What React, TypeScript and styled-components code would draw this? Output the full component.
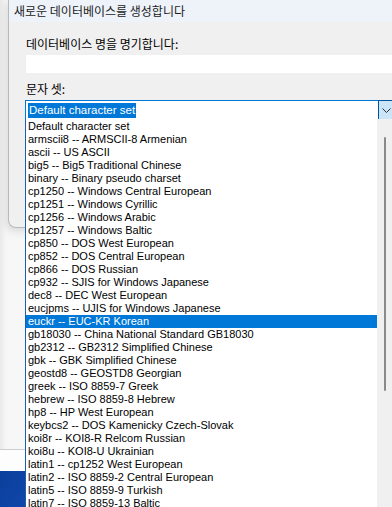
import React from 'react';
import styled, { createGlobalStyle } from 'styled-components';

const charsets = [
  'Default character set',
  'armscii8 -- ARMSCII-8 Armenian',
  'ascii -- US ASCII',
  'big5 -- Big5 Traditional Chinese',
  'binary -- Binary pseudo charset',
  'cp1250 -- Windows Central European',
  'cp1251 -- Windows Cyrillic',
  'cp1256 -- Windows Arabic',
  'cp1257 -- Windows Baltic',
  'cp850 -- DOS West European',
  'cp852 -- DOS Central European',
  'cp866 -- DOS Russian',
  'cp932 -- SJIS for Windows Japanese',
  'dec8 -- DEC West European',
  'eucjpms -- UJIS for Windows Japanese',
  'euckr -- EUC-KR Korean',
  'gb18030 -- China National Standard GB18030',
  'gb2312 -- GB2312 Simplified Chinese',
  'gbk -- GBK Simplified Chinese',
  'geostd8 -- GEOSTD8 Georgian',
  'greek -- ISO 8859-7 Greek',
  'hebrew -- ISO 8859-8 Hebrew',
  'hp8 -- HP West European',
  'keybcs2 -- DOS Kamenicky Czech-Slovak',
  'koi8r -- KOI8-R Relcom Russian',
  'koi8u -- KOI8-U Ukrainian',
  'latin1 -- cp1252 West European',
  'latin2 -- ISO 8859-2 Central European',
  'latin5 -- ISO 8859-9 Turkish',
  'latin7 -- ISO 8859-13 Baltic',
];

const App = () => {
  return (
    <Screen>
      <GlobalStyle />
      <Dialog>
        <TitleBar>
          <Title>새로운 데이터베이스를 생성합니다</Title>
          <Close>✕</Close>
        </TitleBar>
        <Body>
          <Label>데이터베이스 명을 명기합니다:</Label>
          <TextInput />
          <Label>문자 셋:</Label>
          <Combo>
            <ComboValue>
              <Selected>Default character set</Selected>
            </ComboValue>
            <ComboButton>
              <svg width="9" height="5" viewBox="0 0 9 5">
                <path d="M0.5 0.5 L4.5 4.5 L8.5 0.5" fill="none" stroke="#333" strokeWidth="1" />
              </svg>
            </ComboButton>
          </Combo>
        </Body>
      </Dialog>
      <Desktop />
      <WindowStrip />
      <Wallpaper />
      <DropList>
        <Options>
          {charsets.map(c => (
            <Option key={c} $active={c.startsWith('euckr')}>
              {c}
            </Option>
          ))}
        </Options>
        <ScrollTrack>
          <Thumb />
        </ScrollTrack>
      </DropList>
    </Screen>
  );
};

export default App;

const GlobalStyle = createGlobalStyle`
  body {
    margin: 0;
    background: #f7f7f7;
    overflow: hidden;
  }
`;

const Screen = styled.div`
  position: relative;
  display: flex;
  flex-direction: column;
  width: 392px;
  height: 507px;
  overflow: hidden;
  background: linear-gradient(90deg, #e9e9e9 0%, #f6f6f6 6px, #fafafa 100%);
  font-family: 'Noto Sans CJK KR', 'Liberation Sans', sans-serif;
`;

const Dialog = styled.div`
  margin-left: 8px;
  width: 420px;
  height: 228px;
  flex-shrink: 0;
  background: #f0f0f0;
  border: 1px solid #b9b9b9;
  border-top: none;
  border-right: none;
  border-bottom-left-radius: 8px;
  box-shadow: -2px 3px 8px rgba(0, 0, 0, 0.12);
  box-sizing: border-box;
  overflow: hidden;
`;

const TitleBar = styled.div`
  display: flex;
  align-items: center;
  justify-content: space-between;
  height: 22px;
  padding: 0 0 0 5px;
  background: #eef3fa;
`;

const Title = styled.span`
  font-size: 12px;
  color: #1a1a1a;
  margin-top: -1px;
`;

const Close = styled.span`
  width: 30px;
  font-size: 11px;
  color: #222;
  margin-right: -4px;
`;

const Body = styled.div`
  display: flex;
  flex-direction: column;
  padding: 14px 0 0 17px;
`;

const Label = styled.div`
  font-size: 12px;
  line-height: 16px;
  height: 16px;
  color: #000;
  margin-bottom: 2px;
`;

const TextInput = styled.div`
  height: 18px;
  background: #fff;
  margin: 1px 0 8px;
`;

const Combo = styled.div`
  display: flex;
  height: 21px;
  margin-left: -1px;
  margin-top: 1px;
`;

const ComboValue = styled.div`
  display: flex;
  align-items: center;
  width: 350px;
  background: #fff;
  border: 1px solid #0078d7;
  border-bottom-width: 2px;
  border-right: none;
  padding-left: 2px;
`;

const Selected = styled.span`
  background: #0078d7;
  color: #fff;
  font-family: 'Liberation Sans', sans-serif;
  font-size: 11.5px;
  line-height: 15px;
  padding: 0 1px;
`;

const ComboButton = styled.div`
  display: flex;
  align-items: center;
  justify-content: center;
  width: 16px;
  background: #cce4f7;
  border: 1px solid #005499;
  box-sizing: border-box;
`;

const Desktop = styled.div`
  flex: 1;
`;

const WindowStrip = styled.div`
  height: 21px;
  flex-shrink: 0;
  background: #fdfdfd;
  border-top: 1px solid #cfcfcf;
`;

const Wallpaper = styled.div`
  height: 36px;
  flex-shrink: 0;
  background: linear-gradient(125deg, #0b3f9c 0%, #1656c2 35%, #5d8fe0 48%, #1a5ac7 58%, #0a3a8f 100%);
`;

const DropList = styled.div`
  position: absolute;
  left: 25px;
  top: 119px;
  width: 367px;
  height: 400px;
  display: flex;
  background: #fff;
  border-left: 1px solid #1c5fa8;
`;

const Options = styled.div`
  flex: 1;
  padding-top: 1px;
`;

const Option = styled.div<{ $active: boolean }>`
  height: 13px;
  line-height: 13px;
  padding-left: 2px;
  font-family: 'Liberation Sans', sans-serif;
  font-size: 11px;
  white-space: nowrap;
  color: ${p => (p.$active ? '#fff' : '#000')};
  background: ${p => (p.$active ? '#0078d7' : 'transparent')};
`;

const ScrollTrack = styled.div`
  width: 16px;
  background: #f0f0f0;
  display: flex;
  justify-content: center;
  padding-top: 18px;
`;

const Thumb = styled.div`
  width: 2px;
  height: 254px;
  background: #8a8a8a;
  border-radius: 1px;
`;
